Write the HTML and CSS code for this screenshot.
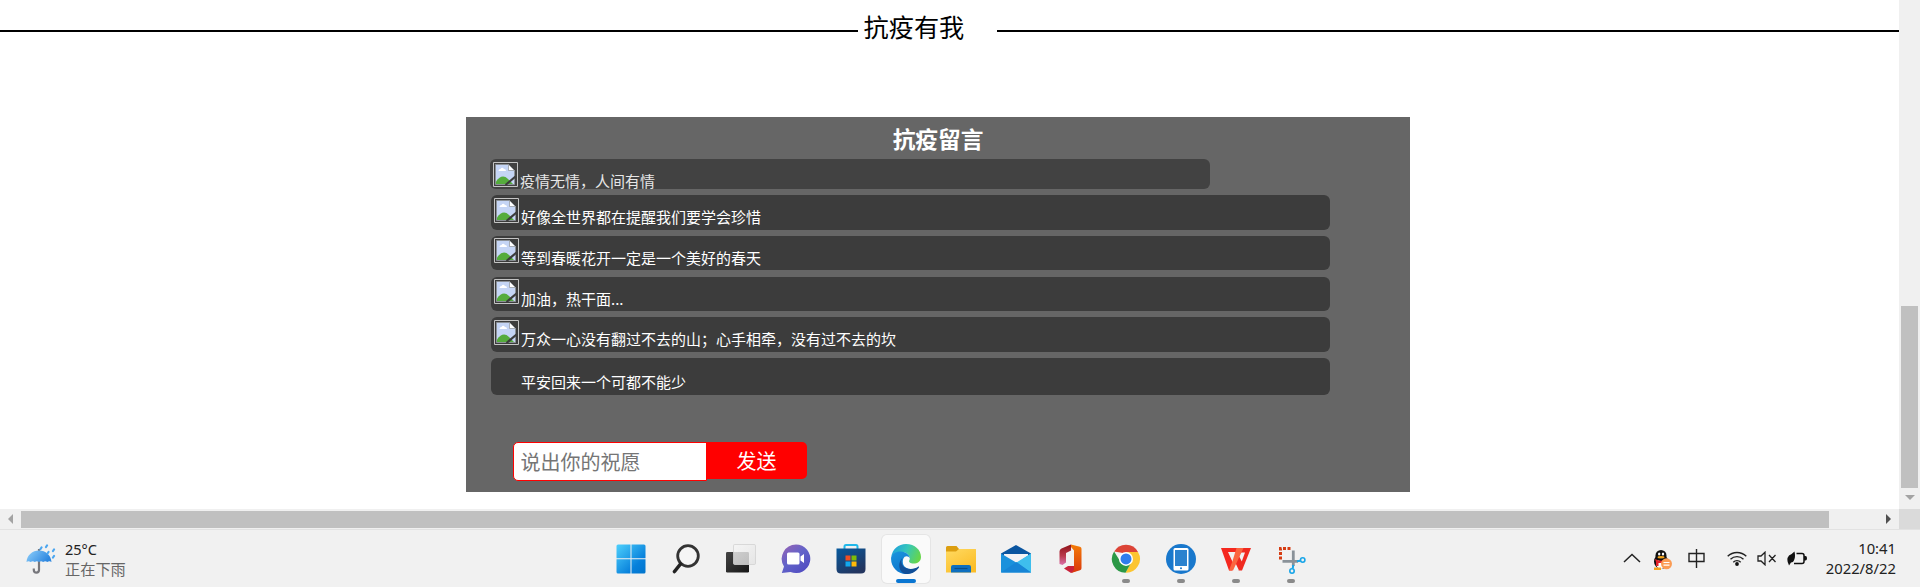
FILE: index.html
```html
<!DOCTYPE html>
<html lang="zh-CN">
<head>
<meta charset="utf-8">
<title>抗疫有我</title>
<link rel="stylesheet" href="styles.css">
</head>
<body>
<div class="screen">
  <div class="browser">
    <main class="page">
      <header class="divider"><span class="line line-left"></span><h1>抗疫有我</h1><span class="line line-right"></span></header>
      <section class="board">
        <h2>抗疫留言</h2>
        <ul class="messages">
          <li class="row fading"><svg class="broken"><use href="#broken"/></svg><span>疫情无情，人间有情</span></li>
          <li class="row r2"><svg class="broken"><use href="#broken"/></svg><span>好像全世界都在提醒我们要学会珍惜</span></li>
          <li class="row r3"><svg class="broken"><use href="#broken"/></svg><span>等到春暖花开一定是一个美好的春天</span></li>
          <li class="row r4"><svg class="broken"><use href="#broken"/></svg><span>加油，热干面...</span></li>
          <li class="row r5"><svg class="broken"><use href="#broken"/></svg><span>万众一心没有翻过不去的山；心手相牵，没有过不去的坎</span></li>
          <li class="row r6"><span class="blank"></span><span>平安回来一个可都不能少</span></li>
        </ul>
        <form class="send"><input type="text" placeholder="说出你的祝愿"><button type="button">发送</button></form>
      </section>
    </main>
    <div class="vbar"><div class="vthumb"></div><svg width="10" height="5"><path d="M0 0H10L5 5Z" fill="#a3a3a3"/></svg></div>
    <div class="hbar"><svg width="5" height="10"><path d="M5 0V10L0 5Z" fill="#a3a3a3"/></svg><div class="hthumb"></div><svg class="right" width="5" height="10"><path d="M0 0V10L5 5Z" fill="#505050"/></svg></div>
    <div class="corner"></div>
  </div>
  <footer class="taskbar">
    <div class="weather">
      <svg width="30" height="30" viewBox="0 0 30 30"><defs><linearGradient id="um" x2="1" y2=".4"><stop stop-color="#8fd0fb"/><stop offset="1" stop-color="#2f88e0"/></linearGradient></defs><path d="M13 5v21a2.600 2.600 0 0 1-5.200 0v-1.500" fill="none" stroke="#77777c" stroke-width="2.200"/><path d="M.5 18C1 11 6.500 6.500 13 6.500S25 11 25.500 18q-2-1.700-4.200 0-2-1.700-4.200 0-2-1.700-4.100 0-2-1.700-4.200 0-2-1.700-4.200 0-2-1.700-4.100 0Z" fill="url(#um)"/><g stroke="#4ba6f0" stroke-width="2.200" stroke-linecap="round"><path d="M15.500 3.500l-1 1.500M21 1.500l-1 1.500M22.500 8l-1 1.500M28 5.500l-1 1.500M28 12l-1 1.500"/></g></svg>
      <div class="weather-text"><span>25°C</span><span class="rain">正在下雨</span></div>
    </div>
    <nav class="apps">
      <span class="app"><svg viewBox="0 0 30 30"><defs><linearGradient id="w" x2="1" y2="1"><stop stop-color="#4ed0fc"/><stop offset=".7" stop-color="#0780db"/><stop offset="1" stop-color="#0074cc"/></linearGradient></defs><path fill="url(#w)" d="M2 .5H14.500V14.200H.5V2Q.5.5 2 .5ZM15.500.5H28q1.500 0 1.500 1.500V14.200H15.500ZM.5 15.300H14.500V29.500H2Q.5 29.500.5 28ZM15.500 15.300H29.500V28q0 1.500-1.500 1.500H15.500Z"/></svg></span>
      <span class="app"><svg viewBox="0 0 30 30"><circle cx="17" cy="12" r="10.300" fill="#f5f5f5" stroke="#333" stroke-width="2.800"/><path d="M9.500 20L3.500 27.500" stroke="#222" stroke-width="3.600" stroke-linecap="round"/></svg></span>
      <span class="app"><svg viewBox="0 0 30 30"><defs><linearGradient id="tv" x2="1" y2="1"><stop stop-color="#444"/><stop offset="1" stop-color="#161616"/></linearGradient><linearGradient id="tw" x2="1" y2="1"><stop stop-color="#f6f6f6"/><stop offset="1" stop-color="#e2e2e2"/></linearGradient></defs><rect y="8" width="23" height="20.500" rx="1.200" fill="url(#tv)"/><rect x="7.500" y=".5" width="22" height="20" rx="1.200" fill="url(#tw)" fill-opacity=".8" stroke="#d2d2d2" stroke-width=".8"/></svg></span>
      <span class="app"><svg viewBox="0 0 30 30"><defs><linearGradient id="ch" x2=".8" y2="1"><stop stop-color="#9a63b4"/><stop offset=".5" stop-color="#6263c9"/><stop offset="1" stop-color="#504bc1"/></linearGradient></defs><path d="M15 .5A14.300 14.300 0 1 1 9.500 28L.8 29 3 22.500A14.300 14.300 0 0 1 15 .5Z" fill="url(#ch)"/><rect x="6" y="8.500" width="12.500" height="12" rx="1.500" fill="#fff"/><path d="M19.500 12.500l3.500-2.500v9l-3.500-2.500Z" fill="#fff"/></svg></span>
      <span class="app"><svg viewBox="0 0 30 30"><defs><linearGradient id="st" x2=".6" y2="1"><stop stop-color="#075a9e"/><stop offset="1" stop-color="#23355f"/></linearGradient></defs><path d="M8.500 6V2.500q0-1.500 1.500-1.500h10q1.500 0 1.500 1.500V6" fill="none" stroke="#21b8ea" stroke-width="2"/><path d="M.5 4.500h29V25q0 4.500-4.500 4.500H5Q.5 29.500.5 25Z" fill="url(#st)"/><path fill="#f04e23" d="M9.500 11.500h5v5h-5z"/><path fill="#7ebd07" d="M15.500 11.500h5v5h-5z"/><path fill="#12a8ed" d="M9.500 17.500h5v5h-5z"/><path fill="#ffba08" d="M15.500 17.500h5v5h-5z"/></svg></span>
      <span class="app active"><svg viewBox="0 0 30 30"><defs><linearGradient id="e1" y1=".2" x2="1" y2=".5"><stop stop-color="#1d9ee0"/><stop offset=".5" stop-color="#35c6ba"/><stop offset="1" stop-color="#66d64b"/></linearGradient><linearGradient id="e2" x2=".5" y2="1"><stop stop-color="#1b94dd"/><stop offset="1" stop-color="#0d74cc"/></linearGradient></defs><path d="M.2 13C1.500 5 7.500 0 15 0c9 0 15 6 15 13 0 4.500-3.500 6.600-7.500 6.600-3 0-5.500-1.200-4-3.500C20 13 17 8 10.500 8 5 8 1.500 10.500.2 13Z" fill="url(#e1)"/><path d="M.2 13C1.800 9 6 7.300 10 7.500c5 .3 9 3.500 8.800 7-1-2.500-5-3.500-6.600.5C10 23 17 27 26 24.500 23 28.500 19 30 15 30 6 30-1 22 .2 13Z" fill="url(#e2)"/><path d="M12.200 13c-3 3-2.200 9 2.800 11 4.500 1.900 9 .8 12-1.200 1-.5 1.400 0 .8 1C25 28 20 30.500 15 29.900 8 29 5.500 19 12.200 13Z" fill="#114f98"/></svg><i></i></span>
      <span class="app"><svg viewBox="0 0 30 30"><defs><linearGradient id="fo" x2=".7" y2="1"><stop stop-color="#ffda62"/><stop offset="1" stop-color="#fbbd27"/></linearGradient></defs><path d="M0 8V3.500q0-1.500 1.500-1.500h9L13 5h15.500q1.500 0 1.500 1.500v3H0Z" fill="#dc9e10"/><path d="M0 7.500h10l3-2.500h16q1 0 1 1V28.500H0Z" fill="url(#fo)"/><path d="M5 28.500v-5.500q0-2 2-2h16q2 0 2 2V28.500Z" fill="#0d6fbf"/><path d="M8.500 24.500h13" stroke="#0a4d88" stroke-width="1.200"/></svg></span>
      <span class="app"><svg viewBox="0 0 30 30"><path d="M0 9.500L15 1 30 9.500v5H0Z" fill="#0a55a0"/><path d="M3 10h24V21H3Z" fill="#f3f3f5"/><path d="M0 9.500l16 9.500L30 9.500v19H0Z" fill="#1a91dc"/><path d="M30 9.500v19L15.500 18.500Z" fill="#3ebeed"/><path d="M0 28.500L15.500 18 30 28.500Z" fill="#1785d6"/></svg></span>
      <span class="app"><svg viewBox="0 0 30 30"><defs><linearGradient id="of" x2="0" y2="1"><stop stop-color="#8e1117"/><stop offset=".55" stop-color="#b93a4c"/><stop offset="1" stop-color="#dc72ac"/></linearGradient><linearGradient id="og" x2="0" y2="1"><stop stop-color="#f47c08"/><stop offset="1" stop-color="#d9370c"/></linearGradient></defs><path d="M5.500 4.500L15 .5v6l-5 2.500v9.500L6.500 21 3.500 20V7.500Q3.500 5.500 5.500 4.500Z" fill="url(#of)"/><path d="M8 24.500l4-2.500h8V27l-5 2Z" fill="#c9213b"/><path d="M15 .5l9 2.200q1.500.5 1.500 2v19.600q0 1.500-1.500 2L15 29l3-3V6.500L15 3Z" fill="url(#og)"/></svg></span>
      <span class="app"><svg viewBox="0 0 30 30"><path d="M3.100 7.500A13.800 13.800 0 0 1 27 8L15 9.500Z" fill="#dc4437"/><path d="M15 8h12A13.800 13.800 0 0 1 14.500 28.800L20.500 17.500Z" fill="#fcc531"/><path d="M3.100 7.500A13.800 13.800 0 0 0 14.500 28.800L20.500 18Q13 22 9 17Z" fill="#2b9846"/><circle cx="15" cy="14.900" r="7" fill="#fff"/><circle cx="15" cy="14.900" r="5.500" fill="#2f7ded"/></svg><b></b></span>
      <span class="app"><svg viewBox="0 0 30 30"><circle cx="15" cy="15" r="15" fill="#1978cc"/><rect x="7.500" y="4" width="15" height="22.500" rx="1.500" fill="#fff"/><path fill="#2a82cf" d="M9 6h12v16H9z"/><circle cx="15" cy="24.200" r="1" fill="#1978cc"/></svg><b></b></span>
      <span class="app"><svg viewBox="0 0 30 30"><path d="M0 4H17V8H7L12.500 20 11 26.500H8Z" fill="#f5281f"/><path d="M18 12L22 20 18 26.500 14 18ZM20 4H30L21 26.500H17.500L24 8.500H20Z" fill="#f02a20"/><path d="M15.500 4H22.500L12 26.500H8L11.500 17Z" fill="#fb6540"/></svg><b></b></span>
      <span class="app"><svg viewBox="0 0 30 30"><path d="M4.500 15.500V4.500H16" fill="none" stroke="#d63c12" stroke-width="3" stroke-dasharray="3 1.500"/><path d="M6.500 17.300H22M17.300 6.500V22" stroke="#8a9299" stroke-width="2.800"/><path d="M21 17.300l3.500-.6M17.300 21l-.6 3.500" stroke="#18a5e8" stroke-width="2"/><circle cx="16" cy="27" r="2.200" fill="none" stroke="#18a5e8" stroke-width="1.600"/><circle cx="26.700" cy="16" r="2.200" fill="none" stroke="#18a5e8" stroke-width="1.600"/></svg><b></b></span>
    </nav>
    <div class="tray">
      <svg class="chev" width="18" height="10" viewBox="0 0 18 10"><path d="M1 9L9 1.500 17 9" fill="none" stroke="#222" stroke-width="1.500"/></svg>
      <svg class="qq" width="19" height="20" viewBox="0 0 19 20"><ellipse cx="8" cy="11.500" rx="7" ry="7.500" fill="#111"/><ellipse cx="8" cy="14" rx="4.800" ry="5" fill="#fff"/><ellipse cx="8" cy="5.500" rx="5.500" ry="5.500" fill="#111"/><ellipse cx="6.200" cy="4" rx="1.200" ry="1.600" fill="#fff"/><ellipse cx="10" cy="4" rx="1.200" ry="1.600" fill="#fff"/><ellipse cx="8" cy="7.200" rx="3.500" ry="1.200" fill="#f5a51a"/><path d="M2 9q6 3.500 12 0v2.500q-5 2-8.500 1.500V16H3v-4Z" fill="#e3222a"/><path d="M1 17.500h7V20H1Z" fill="#f4a421"/><circle cx="13.500" cy="13.800" r="5.500" fill="#fb9c54"/><path d="M10.500 12.500h6M10.500 15.200h6" stroke="#fff" stroke-width="1.200"/></svg>
      <svg class="ime" width="17" height="19" viewBox="0 0 17 19"><path d="M1 4.500h15v8H1ZM8.500 0v19" fill="none" stroke="#222" stroke-width="1.400"/></svg>
      <svg class="wifi" width="20" height="15" viewBox="0 0 20 15"><path d="M.7 5.300a13.200 13.200 0 0 1 18.600 0M3.500 8.300a9.200 9.200 0 0 1 13 0M6.300 11.200a5.200 5.200 0 0 1 7.400 0" fill="none" stroke="#222" stroke-width="1.400"/><circle cx="10" cy="13" r="1.900" fill="#111"/></svg>
      <svg class="mute" width="20" height="15" viewBox="0 0 20 15"><path d="M1 5h3l4-3.800v12.600L4 10H1ZM12 4l6.500 7M18.500 4L12 11" fill="none" stroke="#222" stroke-width="1.300"/></svg>
      <svg class="power" width="21" height="15" viewBox="0 0 21 15"><path d="M9.500 2.500H15q2 0 2 2v6q0 2-2 2H7" fill="none" stroke="#111" stroke-width="1.500"/><path d="M7.500.5Q8.500 5 7.500 8 6.500 11.500 4 11.500L2 14.500 1.500 13Q-1 8 2 4.500 4.500 3.500 7.500.5ZM17 5h1.500q1.500 0 1.500 2.300t-1.500 2.300H17Z" fill="#111"/></svg>
      <div class="clock"><span>10:41</span><span>2022/8/22</span></div>
    </div>
  </footer>
</div>
<svg class="defs"><symbol id="broken" viewBox="0 0 25 25"><path d="M.5.5h24v24H.5Z" fill="none" stroke="#c4c4c4"/><path d="M2.500 2.500h13L21.500 8.500v14h-19Z" fill="#c5d5f5"/><path d="M5.500 9q0-2 2-2 1.500-2.500 3.500 0 2 0 2 2Z" fill="#fff"/><path d="M3 19.500Q9 11 15 17l5 5H3Z" fill="#55ac3c"/><path d="M2.500 2.500h13L21.500 8.500v14h-19Z" fill="none" stroke="#8c9195" stroke-width=".9"/><path d="M15.500 2.500v6h6Z" fill="#fff" stroke="#8c9195" stroke-width=".7"/><path d="M22.500 14.500L12.500 23" stroke="#3c3c3c" stroke-width="2.200"/></symbol></svg>
</body>
</html>
```
FILE: styles.css
```css
* { box-sizing: border-box; }
body { margin: 0; font-family: "Noto Sans CJK SC", sans-serif; overflow: hidden; }
.screen { width: 1920px; height: 587px; display: flex; flex-direction: column; }
.browser { height: 529px; display: grid; grid-template: 509px 20px / 1899px 21px; background: #f0f0f0; }
.page { background: #fff; }
.divider { display: flex; height: 62px; }
.line { height: 2px; background: #000; margin-top: 30px; }
.line-left { width: 858px; }
.line-right { flex: 1; }
h1 { width: 139px; margin: 0; padding-left: 5.5px; font-size: 25.2px; font-weight: 400; line-height: 53px; color: #000; }
.board { width: 944px; height: 375px; margin: 55px 0 0 466px; background: #666; color: #fff; display: flow-root; }
h2 { margin: 0; height: 42px; font-size: 22.7px; font-weight: 700; line-height: 43px; text-align: center; }
.messages { list-style: none; margin: 0; padding: 0 0 0 25px; height: 283px; }
.row { display: flex; width: 839px; height: 35px; margin-bottom: 6px; padding: 3px; background: #3c3c3c; border-radius: 6px; font-size: 15px; line-height: 22px; }
.row > span { margin: 8px 0 0 2px; white-space: nowrap; }
.fading { width: 720px; height: 30px; margin-left: -1px; background: #424242; color: #e6e6e6; }
.r3, .r4 { height: 34px; padding-top: 2px; }
.r3 { margin-bottom: 7px; }
.r3 > span, .r4 > span { margin-top: 9px; }
.r6 { height: 37px; }
.r6 > span { margin-top: 10px; }
.broken, .blank { width: 25px; height: 25px; flex: none; }
.row > .blank { margin: 0; }
.send { display: flex; align-items: flex-start; margin-left: 47px; }
.send input { width: 194px; height: 39px; border: 1px solid #f00; border-radius: 5px 0 0 5px; background: #fff; padding: 0 6.5px; font: 400 20px "Noto Sans CJK SC", sans-serif; outline: 0; }
.send input::placeholder { color: #757575; opacity: 1; }
.send button { width: 101px; height: 37px; margin-left: -1px; padding: 0; border: 0; border-radius: 0 5px 5px 0; background: #f00; color: #fff; font: 400 20px "Noto Sans CJK SC", sans-serif; }
.vbar { padding: 306px 2px 0; display: flex; flex-direction: column; align-items: center; gap: 7px; }
.vthumb { width: 17px; height: 182px; background: #c0c0c0; }
.hbar { display: flex; align-items: center; padding-left: 8px; }
.hthumb { width: 1808px; height: 17px; margin-left: 8px; background: #c0c0c0; }
.right { margin-left: 57px; }
.corner { background: #dadada; }
.taskbar { height: 58px; background: #f1f1f1; border-top: 1px solid #e2e2e2; display: flex; font-family: "Noto Sans", "Noto Sans CJK SC", sans-serif; color: #222; }
.weather { width: 603px; padding: 14px 0 0 26px; display: flex; gap: 9px; }
.weather-text { display: flex; flex-direction: column; font-size: 14.5px; line-height: 20px; margin-top: -5px; }
.rain { font-size: 15.2px; line-height: 20px; color: #666; }
.apps { display: flex; width: 1006px; }
.app { flex: none; width: 48px; height: 48px; margin: 5px 3.500px 0; padding: 9px; position: relative; border-radius: 5px; }
.app > svg { width: 30px; height: 30px; display: block; }
.active { background: #fafafa; box-shadow: 0 0 0 1px #e5e5e5; }
.app i, .app b { position: absolute; bottom: 0; height: 4px; border-radius: 2px; }
.app i { width: 20px; left: 14px; background: #0a76d2; }
.app b { width: 8px; left: 20px; background: #8a8a8a; }
.tray { flex: 1; display: flex; align-items: flex-start; padding-left: 14px; }
.tray > svg { flex: none; }
.chev { margin-top: 23px; }
.qq { margin: 20px 0 0 12px; }
.ime { margin: 19px 0 0 16px; }
.wifi { margin: 21px 0 0 22px; }
.mute { margin: 21px 0 0 10px; }
.power { margin: 21px 0 0 10px; }
.clock { margin: 8px 24px 0 auto; display: flex; flex-direction: column; align-items: flex-end; font-size: 14.8px; line-height: 20px; }
.defs { display: none; }
```
